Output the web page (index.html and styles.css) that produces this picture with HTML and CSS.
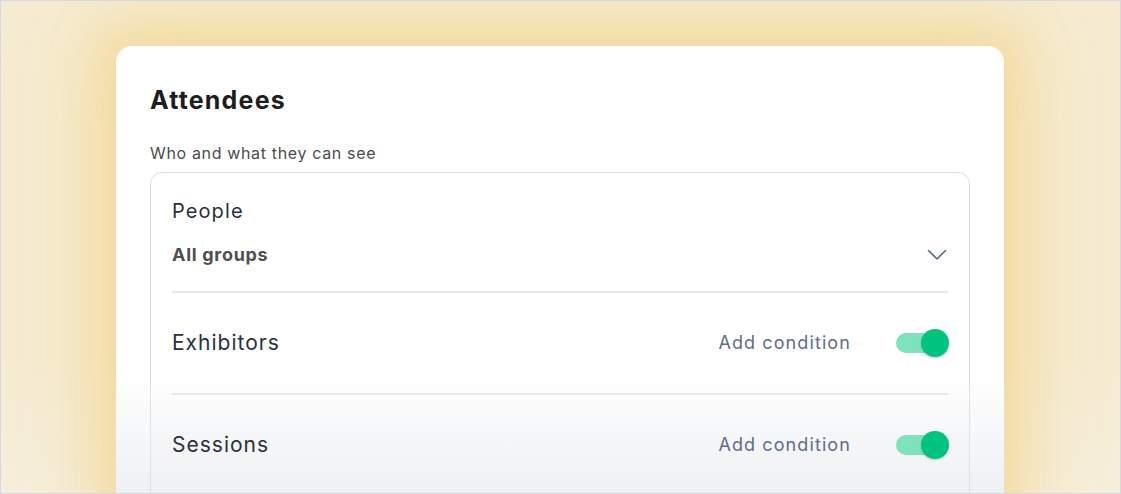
FILE: index.html
```html
<!DOCTYPE html>
<html lang="en">
<head>
<meta charset="utf-8">
<title>Attendees</title>
<link rel="stylesheet" href="styles.css">
</head>
<body>
<div class="frame">
  <div class="fade"></div>
  <div class="card">
    <h1 class="title">Attendees</h1>
    <p class="subtitle">Who and what they can see</p>
    <div class="box">
      <div class="people">
        <div class="label label-people">People</div>
        <div class="select">
          <span class="select-value">All groups</span>
          <svg class="chevron" width="20" height="12" viewBox="0 0 20 12"><path d="M1.5 1.5 L10 10 L18.5 1.5" fill="none" stroke="#5a6687" stroke-width="1.6" stroke-linecap="round" stroke-linejoin="round"/></svg>
        </div>
      </div>
      <div class="row">
        <span class="label">Exhibitors</span>
        <div class="actions">
          <span class="link">Add condition</span>
          <span class="toggle"><span class="knob"></span></span>
        </div>
      </div>
      <div class="row">
        <span class="label">Sessions</span>
        <div class="actions">
          <span class="link">Add condition</span>
          <span class="toggle"><span class="knob"></span></span>
        </div>
      </div>
    </div>
  </div>
</div>
</body>
</html>
```

FILE: styles.css
```css
* { box-sizing: border-box; }
html, body { margin: 0; padding: 0; }
body { font-family: Inter, "Liberation Sans", sans-serif; }

.frame {
  position: relative;
  width: 1121px;
  height: 494px;
  overflow: hidden;
  border: 1px solid #d3dae2;
  background: #f6ecd2;
  padding: 45px 0 0 115px;
}

.card {
  position: relative;
  z-index: 1;
  width: 888px;
  height: 520px;
  background: linear-gradient(180deg, #ffffff 0px, #ffffff 330px, #f5f6f8 395px, #eef0f3 448px, #eef0f3 520px);
  border-radius: 16px;
  padding: 38px 34px 0 34px;
  box-shadow: 0 0 40px 20px rgba(242, 212, 140, 0.55), 0 0 90px 40px rgba(244, 222, 165, 0.45);
}

.title {
  margin: 0;
  font-size: 25px;
  line-height: 32px;
  font-weight: 700;
  color: #1e1e1e;
  letter-spacing: 1.2px;
}

.subtitle {
  margin: 27px 0 0 0;
  font-size: 16px;
  line-height: 20px;
  color: #4b4b4b;
  letter-spacing: 0.65px;
}

.box {
  margin-top: 9px;
  border: 1px solid #dcdfe4;
  border-radius: 12px;
  padding: 0 21px;
  height: 400px;
}

.people {
  padding-top: 25px;
  height: 120px;
  border-bottom: 2px solid #e6e8eb;
}

.label {
  font-size: 21px;
  line-height: 26px;
  color: #29303d;
  letter-spacing: 1px;
}

.label-people {
  font-size: 20px;
  letter-spacing: 1.1px;
}

.select {
  display: flex;
  align-items: center;
  justify-content: space-between;
  margin-top: 20px;
}

.select-value {
  font-size: 18px;
  line-height: 22px;
  font-weight: 700;
  color: #4f4f4f;
  letter-spacing: 0.7px;
}

.chevron { margin-right: 1px; }

.row {
  display: flex;
  align-items: center;
  justify-content: space-between;
  height: 102px;
  border-bottom: 2px solid #e6e8eb;
}

.actions {
  display: flex;
  align-items: center;
  gap: 45px;
}

.link {
  font-size: 18px;
  line-height: 24px;
  color: #5e6d8c;
  letter-spacing: 1.1px;
}

.toggle {
  position: relative;
  width: 42px;
  height: 20px;
  border-radius: 10px;
  background: #7ee2bd;
  margin-right: 10px;
}

.knob {
  position: absolute;
  right: -11px;
  top: -4px;
  width: 28px;
  height: 28px;
  border-radius: 50%;
  background: #03c47f;
  box-shadow: 0 1px 2px rgba(0, 0, 0, 0.18);
}

.fade {
  position: absolute;
  left: 0;
  right: 0;
  bottom: 0;
  height: 140px;
  background: linear-gradient(180deg, rgba(246, 240, 225, 0) 0%, rgba(246, 241, 230, 0.6) 100%);
  pointer-events: none;
}
```
